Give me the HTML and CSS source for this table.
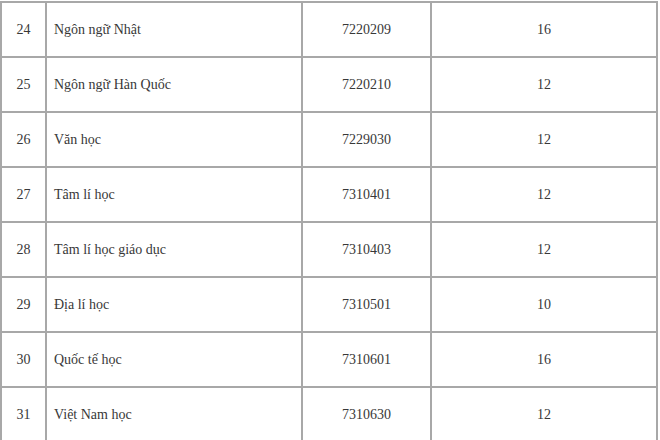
FILE: index.html
```html
<!DOCTYPE html>
<html lang="vi">
<head>
<meta charset="utf-8">
<title>Danh sách ngành</title>
<link rel="stylesheet" href="styles.css">
</head>
<body>
<table class="majors">
  <colgroup>
    <col class="c-stt">
    <col class="c-name">
    <col class="c-code">
    <col class="c-quota">
  </colgroup>
  <tbody>
    <tr><td class="stt">24</td><td class="name">Ngôn ngữ Nhật</td><td class="code">7220209</td><td class="quota">16</td></tr>
    <tr><td class="stt">25</td><td class="name">Ngôn ngữ Hàn Quốc</td><td class="code">7220210</td><td class="quota">12</td></tr>
    <tr><td class="stt">26</td><td class="name">Văn học</td><td class="code">7229030</td><td class="quota">12</td></tr>
    <tr><td class="stt">27</td><td class="name">Tâm lí học</td><td class="code">7310401</td><td class="quota">12</td></tr>
    <tr><td class="stt">28</td><td class="name">Tâm lí học giáo dục</td><td class="code">7310403</td><td class="quota">12</td></tr>
    <tr><td class="stt">29</td><td class="name">Địa lí học</td><td class="code">7310501</td><td class="quota">10</td></tr>
    <tr><td class="stt">30</td><td class="name">Quốc tế học</td><td class="code">7310601</td><td class="quota">16</td></tr>
    <tr><td class="stt">31</td><td class="name">Việt Nam học</td><td class="code">7310630</td><td class="quota">12</td></tr>
  </tbody>
</table>
</body>
</html>
```

FILE: styles.css
```css
html, body {
  margin: 0;
  padding: 0;
  background: #ffffff;
}

.majors {
  border-collapse: collapse;
  table-layout: fixed;
  width: 658px;
  margin-top: 1px;
  font-family: "Liberation Serif", "Times New Roman", serif;
  font-size: 14px;
  color: #383838;
}

.c-stt { width: 45px; }
.c-name { width: 256px; }
.c-code { width: 129px; }
.c-quota { width: 226px; }

.majors td {
  border: 2px solid #a8a8a8;
  height: 55px;
  padding: 0;
  vertical-align: middle;
  box-sizing: border-box;
}

.majors .stt,
.majors .code,
.majors .quota {
  text-align: center;
}

.majors .name {
  text-align: left;
  padding-left: 7px;
}
```
